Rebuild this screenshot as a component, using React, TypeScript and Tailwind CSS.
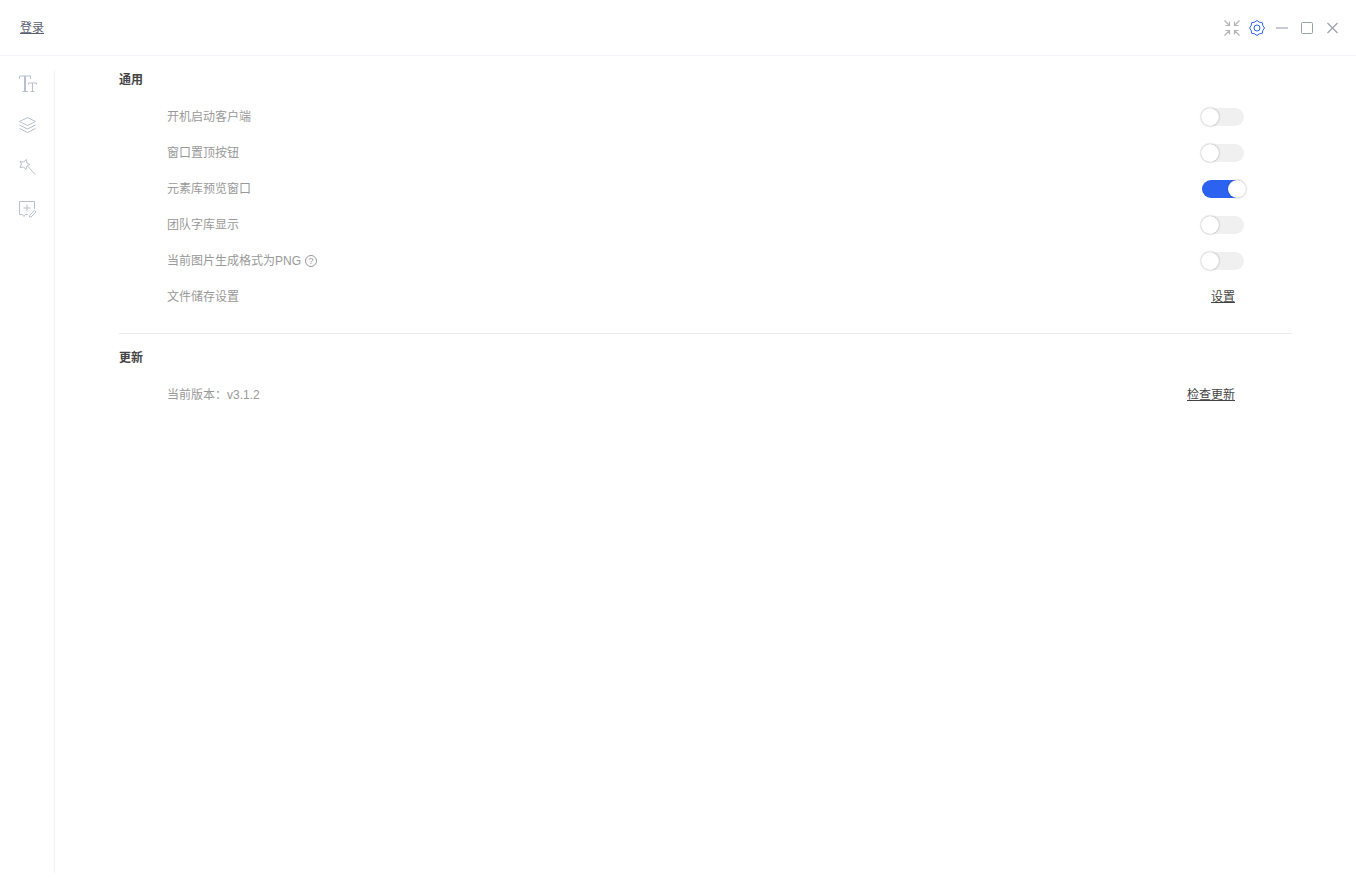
function Toggle({ on }: { on?: boolean }) {
  if (on) {
    return (
      <div className="relative h-[18px] w-[43px] rounded-full bg-[#2b62f0]">
        <div className="absolute -right-[1px] top-0 h-[18px] w-[18px] rounded-full bg-white shadow-[0_0_2px_rgba(0,0,0,0.4)]" />
      </div>
    )
  }
  return (
    <div className="relative mr-[1px] h-[18px] w-[43px] rounded-full bg-[#f0f0f0]">
      <div className="absolute left-0 top-0 h-[18px] w-[18px] rounded-full bg-white shadow-[0_0_2px_rgba(0,0,0,0.4)]" />
    </div>
  )
}

export default function App() {
  const rows = [
    { label: "开机启动客户端" },
    { label: "窗口置顶按钮" },
    { label: "元素库预览窗口", on: true },
    { label: "团队字库显示" },
    { label: "当前图片生成格式为PNG", help: true },
  ]

  return (
    <div className="flex h-[888px] flex-col bg-white font-['Liberation_Sans','Noto_Sans_CJK_SC',sans-serif] text-xs">
      {/* Title bar */}
      <header className="flex h-[56px] items-center justify-between border-b border-[#f2f2f8] pl-5 pr-[18px]">
        <span className="text-[#5a6070] underline">登录</span>
        <div className="flex items-center">
          <svg className="h-4 w-4 text-[#b4b4b4]" viewBox="0 0 16 16" fill="none" stroke="currentColor" strokeWidth="1.200">
            <path d="M.5.5l5 5M5.500 1.500v4h-4M15.500.5l-5 5M10.500 1.500v4h4M.5 15.500l5-5M5.500 14.500v-4h-4M15.500 15.500l-5-5M10.500 14.500v-4h4" />
          </svg>
          <svg className="ml-[9px] h-4 w-4 text-[#2b62f0]" viewBox="0 0 16 16" fill="none" stroke="currentColor" strokeLinejoin="round">
            <path d="M15.500 8L13.820 10.410 13.300 13.300 10.410 13.820 8 15.500 5.590 13.820 2.700 13.300 2.180 10.410 .5 8 2.180 5.590 2.700 2.700 5.590 2.180 8 .5 10.410 2.180 13.300 2.700 13.820 5.590z" />
            <circle cx="8" cy="8" r="3" />
          </svg>
          <svg className="ml-[11px] h-3 w-3 text-[#b5b8c0]" viewBox="0 0 12 12" fill="none" stroke="currentColor" strokeWidth="1.500">
            <path d="M0 6h12" />
          </svg>
          <svg className="ml-[13px] h-3 w-3 text-[#9aa0aa]" viewBox="0 0 12 12" fill="none" stroke="currentColor">
            <rect x=".5" y=".5" width="11" height="11" rx="1" />
          </svg>
          <svg className="ml-[14px] h-3 w-[11px] text-[#9aa0aa]" viewBox="0 0 11 12" fill="none" stroke="currentColor" strokeWidth="1.200">
            <path d="M.5 1l10 10M10.500 1L.5 11" />
          </svg>
        </div>
      </header>

      <div className="flex flex-1 pb-[15px]">
        {/* Sidebar */}
        <aside className="mt-[14px] flex w-[55px] flex-col items-center gap-[22px] border-r border-[#f2f2f8] pt-[3px] text-[#b8bfcf]">
          <svg className="h-5 w-5" viewBox="0 0 20 20" fill="none" stroke="currentColor">
            <path d="M2.500 6V3h11v3M7.500 3v15M8.500 3v15M5.500 18.500h5.500M11.500 11.500V10h8v1.500M15.500 10v8.500M13.500 18.500h4" />
          </svg>
          <svg className="h-5 w-5" viewBox="0 0 20 20" fill="none" stroke="currentColor" strokeLinejoin="round">
            <path d="M10.500 2.500l8 4-8 4-8-4zM2.500 10l8 4 8-4M2.500 13.500l8 4 8-4" />
          </svg>
          <svg className="h-5 w-5" viewBox="0 0 20 20" fill="none" stroke="currentColor" strokeLinejoin="round">
            <path d="M9.500 2.500l.5 3.500 3 1.500-3 1.500-1 3.500-2.500-2.500-3.500.5 1.500-3.500L3 4.500l3.500.5zM11 9.500l7 8" />
          </svg>
          <svg className="h-5 w-5" viewBox="0 0 20 20" fill="none" stroke="currentColor" strokeLinejoin="round">
            <path d="M17.500 10V2.500h-15v13h3l1.500 2 1.500-2h2M10 5.500v7M6.500 9h7M12.500 16.500l5-5 1.500 1.500-5 5h-1.500z" />
          </svg>
        </aside>

        {/* Content */}
        <main className="ml-16 mr-16 flex-1">
          <section className="border-b border-[#ebebeb] pb-[18px] pt-[16px]">
            <h2 className="font-bold leading-4 text-[#444]">通用</h2>
            <div className="ml-12 mr-[47px] mt-[11px]">
              {rows.map((row) => (
                <div key={row.label} className="flex h-9 items-center justify-between text-[#999]">
                  <span className="flex items-center gap-1">
                    {row.label}
                    {row.help && <span className="flex h-3 w-3 items-center justify-center rounded-full border border-[#999] text-[9px]">?</span>}
                  </span>
                  <Toggle on={row.on} />
                </div>
              ))}
              <div className="flex h-9 items-center justify-between text-[#999]">
                <span>文件储存设置</span>
                <span className="mr-[10px] text-[#444] underline">设置</span>
              </div>
            </div>
          </section>
          <section className="pt-4">
            <h2 className="font-bold leading-4 text-[#444]">更新</h2>
            <div className="ml-12 mr-[57px] mt-[11px] flex h-9 items-center justify-between text-[#999]">
              <span>当前版本：v3.1.2</span>
              <span className="text-[#444] underline">检查更新</span>
            </div>
          </section>
        </main>
      </div>
    </div>
  )
}
